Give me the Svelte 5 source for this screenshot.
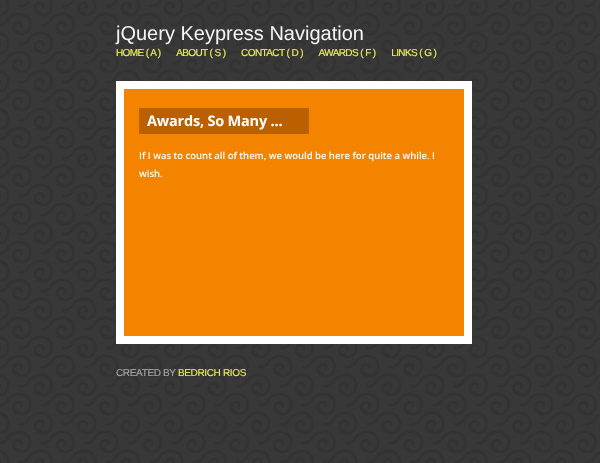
<script>
  const links = [
    { label: 'HOME ( A )' },
    { label: 'ABOUT ( S )' },
    { label: 'CONTACT ( D )' },
    { label: 'AWARDS ( F )' },
    { label: 'LINKS ( G )' }
  ];
</script>

<svg class="bg" width="600" height="463" aria-hidden="true">
  <defs>
    <pattern id="dots" width="2" height="2" patternUnits="userSpaceOnUse">
      <rect x="0" y="0" width="1" height="1" fill="#363636" />
      <rect x="1" y="1" width="1" height="1" fill="#363636" />
    </pattern>
    <g id="swirl" fill="none" stroke="#232323" stroke-width="2.4" stroke-linecap="round">
      <path transform="scale(1.2)" d="M1 1 C3 -2 -3 -4 -5 0 C-7 5 -1 9 4 7 C10 4 10 -5 4 -8 C-2 -11 -9 -8 -11 -3 C-13 -1 -15 1 -18 0" />
      <path d="M16 -12 L19 -14 L22 -12 L19 -10 Z" fill="#232323" stroke-width="1" />
    </g>
    <pattern id="swirls" width="43.5" height="38" patternUnits="userSpaceOnUse">
      <use href="#swirl" x="20" y="25" />
      <use href="#swirl" x="41.5" y="6" />
      <use href="#swirl" x="-2" y="6" />
      <use href="#swirl" x="41.5" y="44" />
      <use href="#swirl" x="-2" y="44" />
      <use href="#swirl" x="63.5" y="25" />
    </pattern>
  </defs>
  <rect width="600" height="463" fill="#3a3a3a" />
  <rect width="600" height="463" fill="url(#dots)" />
  <rect width="600" height="463" fill="url(#swirls)" opacity="0.25" />
</svg>

<div class="page">
  <h1>jQuery Keypress Navigation</h1>
  <nav>
    {#each links as link}
      <a href="#top">{link.label}</a>
    {/each}
  </nav>
  <main class="card">
    <section class="panel">
      <h2>Awards, So Many ...</h2>
      <p>If I was to count all of them, we would be here for quite a while. I wish.</p>
    </section>
  </main>
  <footer>CREATED BY <a href="#top">BEDRICH RIOS</a></footer>
</div>

<style>
  :global(body) {
    margin: 0;
    background: #363636;
  }
  .bg {
    position: fixed;
    left: 0;
    top: 0;
    z-index: 0;
    display: block;
  }
  .page {
    position: relative;
    z-index: 1;
    width: 356px;
    margin-left: 116px;
    padding-top: 23px;
    font-family: "Liberation Sans", Arial, sans-serif;
    text-rendering: geometricPrecision;
  }
  h1 {
    margin: 0;
    font-size: 20px;
    line-height: 23px;
    font-weight: 400;
    color: #f4f6f6;
  }
  nav {
    display: flex;
    gap: 15.6px;
    margin-top: 2px;
    height: 33px;
  }
  nav a {
    font-size: 10px;
    line-height: 12px;
    letter-spacing: -0.6px;
    color: #eef05a;
    text-decoration: none;
    white-space: nowrap;
    -webkit-text-stroke: 0.15px #eef05a;
  }
  .card {
    background: #fff;
    padding: 8px;
    height: 247px;
  }
  .panel {
    background: #f48400;
    height: 247px;
    padding: 19px 15px 0;
    box-sizing: border-box;
    font-family: "Open Sans", "Noto Sans", sans-serif;
    color: #fff;
  }
  h2 {
    margin: 0;
    width: 170px;
    height: 26px;
    box-sizing: border-box;
    padding-left: 8px;
    background: #bb6000;
    font-size: 14.5px;
    line-height: 28px;
    font-weight: 700;
    letter-spacing: -0.2px;
    white-space: nowrap;
  }
  p {
    margin: 13px 0 0;
    font-size: 9.5px;
    line-height: 18px;
    font-weight: 600;
  }
  footer {
    margin-top: 24px;
    font-size: 10px;
    line-height: 12px;
    color: #a9aaa9;
    letter-spacing: -0.35px;
    -webkit-text-stroke: 0.1px currentColor;
  }
  footer a {
    color: #eef05a;
    text-decoration: none;
  }
</style>
